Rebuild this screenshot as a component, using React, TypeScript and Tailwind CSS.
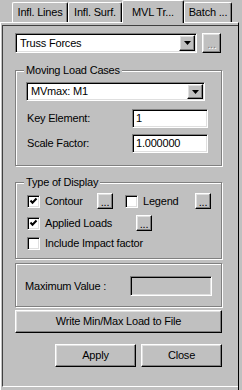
import type { ReactNode } from 'react';

const raised =
  'flex items-center justify-center bg-[#c0c0c0] border border-t-white border-l-white border-r-black border-b-black shadow-[inset_-1px_-1px_0_#808080,inset_1px_1px_0_#dfdfdf]';
const sunken =
  'border border-t-[#808080] border-l-[#808080] border-r-white border-b-white shadow-[inset_1px_1px_0_#000,inset_-1px_-1px_0_#dfdfdf]';

function Arrow() {
  return (
    <svg width="7" height="4" viewBox="0 0 7 4">
      <path d="M0 0H7L3.5 4Z" fill="#000" />
    </svg>
  );
}

function Combo({ value, className }: { value: string; className: string }) {
  return (
    <div className={`flex items-center bg-white p-[1px] ${sunken} ${className}`}>
      <span className="flex-1 pl-[3px] leading-none">{value}</span>
      <div className={`${raised} h-full w-[16px]`}>
        <Arrow />
      </div>
    </div>
  );
}

function Dots({ disabled = false, className = '' }: { disabled?: boolean; className?: string }) {
  return (
    <div className={`${raised} ${className}`}>
      <span
        className={`pt-[3px] leading-none ${disabled ? 'text-[#808080] [text-shadow:1px_1px_0_#fff]' : 'text-black'}`}
      >
        ...
      </span>
    </div>
  );
}

function Check({ checked, label, className = '' }: { checked: boolean; label: string; className?: string }) {
  return (
    <div className={`flex items-center ${className}`}>
      <span className={`flex h-[13px] w-[13px] shrink-0 items-center justify-center bg-white ${sunken}`}>
        {checked && (
          <svg width="9" height="9" viewBox="0 0 9 9">
            <path d="M1.5 3.5L3.5 5.8L7.5 1.5" stroke="#000" strokeWidth="2" fill="none" />
          </svg>
        )}
      </span>
      <span className="ml-[5px] leading-none">{label}</span>
    </div>
  );
}

function Group({ title, className, children }: { title?: string; className: string; children: ReactNode }) {
  return (
    <div
      className={`relative w-[207px] border border-[#808080] shadow-[inset_1px_1px_0_#fff,1px_1px_0_#fff] ${className}`}
    >
      {title && (
        <span className="absolute -top-[7px] left-[8px] bg-[#c0c0c0] px-[2px] leading-[13px]">{title}</span>
      )}
      {children}
    </div>
  );
}

function Tab({ label, width, active = false }: { label: string; width: string; active?: boolean }) {
  if (active) {
    return (
      <div
        className={`relative z-10 -mb-[1px] flex h-[23px] items-start justify-center rounded-t-[2px] border-l border-r border-t border-l-white border-r-black border-t-white bg-[#c0c0c0] pt-[3px] shadow-[inset_-1px_0_0_#808080] ${width}`}
      >
        {label}
      </div>
    );
  }
  return (
    <div
      className={`flex h-[20px] items-center justify-center rounded-t-[2px] border-l border-r border-t border-l-white border-r-black border-t-white shadow-[inset_-1px_0_0_#808080] ${width}`}
    >
      {label}
    </div>
  );
}

export default function App() {
  return (
    <div className="h-[390px] w-[242px] overflow-hidden bg-[#c0c0c0] font-['Liberation_Sans',Arial,sans-serif] text-[11px] tracking-[-0.2px] text-black">
      <div className="flex h-[22px] items-end pl-[12px]">
        <Tab label="Infl. Lines" width="w-[56px]" />
        <Tab label="Infl. Surf." width="w-[54px]" />
        <Tab label="MVL Tr..." width="w-[62px]" active />
        <Tab label="Batch ..." width="w-[48px]" />
      </div>

      <div className="h-[368px] w-[239px] border-l border-r border-t border-l-white border-r-black border-t-white">
        <div className="ml-[1px] mt-[2px] h-[362px] border-b border-l border-t border-b-white border-l-[#404040] border-t-[#404040] pl-[12px] pt-[7px]">
          <div className="flex w-[207px] items-center">
            <Combo value="Truss Forces" className="h-[20px] w-[182px]" />
            <Dots disabled className="ml-[5px] h-[20px] w-[19px]" />
          </div>

          <Group title="Moving Load Cases" className="mt-[17px] h-[96px] pl-[10px] pt-[11px]">
            <Combo value="MVmax: M1" className="h-[19px] w-[179px]" />
            <div className="mt-[8px] flex h-[19px] items-center">
              <span className="w-[106px] pl-[1px]">Key Element:</span>
              <div className={`flex h-[19px] w-[76px] items-center bg-white pl-[3px] ${sunken}`}>1</div>
            </div>
            <div className="mt-[6px] flex h-[19px] items-center">
              <span className="w-[106px] pl-[1px]">Scale Factor:</span>
              <div className={`flex h-[19px] w-[76px] items-center bg-white pl-[3px] ${sunken}`}>1.000000</div>
            </div>
          </Group>

          <Group title="Type of Display" className="mt-[16px] h-[77px] pl-[11px] pt-[10px]">
            <div className="flex h-[16px] items-center">
              <Check checked label="Contour" className="w-[70px]" />
              <Dots className="h-[16px] w-[16px]" />
              <Check checked={false} label="Legend" className="ml-[12px] w-[70px]" />
              <Dots className="h-[16px] w-[16px]" />
            </div>
            <div className="mt-[6px] flex h-[16px] items-center">
              <Check checked label="Applied Loads" className="w-[109px]" />
              <Dots className="h-[16px] w-[16px]" />
            </div>
            <div className="mt-[6px] flex h-[13px] items-center">
              <Check checked={false} label="Include Impact factor" />
            </div>
          </Group>

          <Group className="mt-[4px] h-[44px] pl-[9px] pt-[12px]">
            <div className="flex h-[20px] items-center">
              <span className="w-[105px]">Maximum Value :</span>
              <div className={`h-[20px] w-[82px] bg-[#c0c0c0] ${sunken}`} />
            </div>
          </Group>

          <div className={`${raised} mt-[3px] h-[23px] w-[207px]`}>Write Min/Max Load to File</div>

          <div className="mt-[11px] flex gap-[5px] pl-[40px]">
            <div className={`${raised} h-[23px] w-[81px]`}>Apply</div>
            <div className={`${raised} h-[23px] w-[81px]`}>Close</div>
          </div>
        </div>
      </div>
    </div>
  );
}
